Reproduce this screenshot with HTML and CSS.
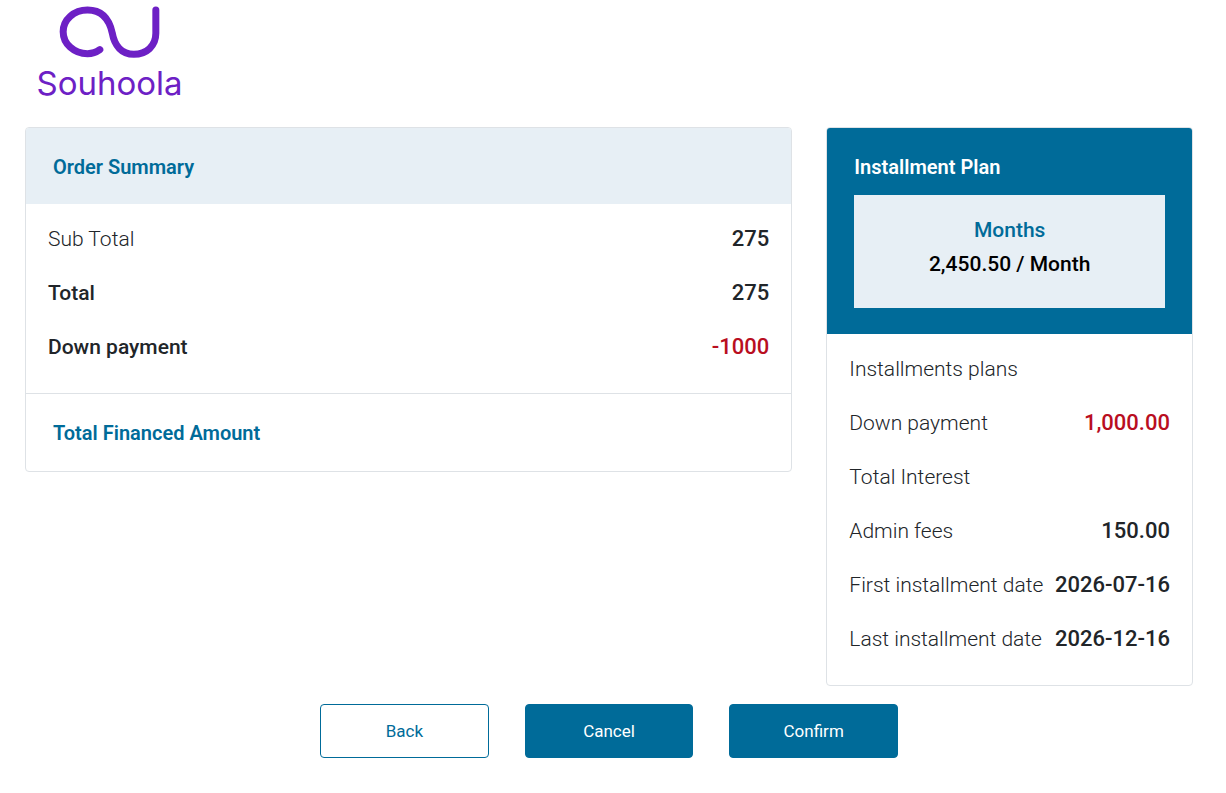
FILE: index.html
```
<!DOCTYPE html>
<html lang="en">
<head>
    <meta charset="UTF-8">
    <meta name="viewport" content="width=device-width, initial-scale=1">
    <title>Souhoola</title>
    <link rel="stylesheet" href="styles.css">
</head>
<body>
    <header class="logo">
        <svg class="logo-mark" viewBox="0 0 440 180" aria-hidden="true">
            <path d="M191 149 C180 157 168 161 154 161 C113 161 81 131 81 95 C81 59 113 30 154 30 C197 30 219 57 228 98 C235 138 257 163 293 163 C331 163 359 138 359 100 L359 30"/>
        </svg>
        <span class="logo-name">Souhoola</span>
    </header>

    <main>
        <div class="row">
            <div class="col-8">
                <section class="card">
                    <div class="card-header">
                        <h2>Order Summary</h2>
                    </div>
                    <dl class="list">
                        <div class="item"><dt>Sub Total</dt><dd>275</dd></div>
                        <div class="item strong"><dt>Total</dt><dd>275</dd></div>
                        <div class="item strong"><dt>Down payment</dt><dd class="red">-1000</dd></div>
                    </dl>
                    <div class="card-footer">
                        <h2>Total Financed Amount</h2>
                    </div>
                </section>
            </div>

            <div class="col-4">
                <section class="card">
                    <div class="plan-header">
                        <h2>Installment Plan</h2>
                        <div class="plan-box">
                            <div class="plan-months">Months</div>
                            <div>2,450.50 / Month</div>
                        </div>
                    </div>
                    <dl class="list">
                        <div class="item"><dt>Installments plans</dt><dd></dd></div>
                        <div class="item"><dt>Down payment</dt><dd class="red">1,000.00</dd></div>
                        <div class="item"><dt>Total Interest</dt><dd></dd></div>
                        <div class="item"><dt>Admin fees</dt><dd>150.00</dd></div>
                        <div class="item"><dt>First installment date</dt><dd>2026-07-16</dd></div>
                        <div class="item"><dt>Last installment date</dt><dd>2026-12-16</dd></div>
                    </dl>
                </section>
            </div>
        </div>

        <div class="actions">
            <button type="button" class="btn btn-outline">Back</button>
            <button type="button" class="btn">Cancel</button>
            <button type="button" class="btn">Confirm</button>
        </div>
    </main>
</body>
</html>
```
FILE: styles.css
```
* {
    box-sizing: border-box;
}

body {
    margin: 0;
    padding: 0 16px 0 8px;
    background-color: #fff;
    color: #212529;
    font-family: Roboto, "Noto Sans", sans-serif;
    font-size: 21px;
    line-height: 34px;
}

h2 {
    margin: 0;
    font-size: 20px;
    font-weight: 600;
    line-height: 34px;
    color: #006b99;
}

.logo {
    display: inline-flex;
    flex-direction: column;
    align-items: center;
    height: 127px;
    padding-left: 28px;
    color: #6d20c5;
}

.logo-mark {
    width: 147px;
    height: 60px;
}

.logo-mark path {
    fill: none;
    stroke: currentColor;
    stroke-width: 21;
    stroke-linecap: round;
}

.logo-name {
    font-family: Inter, sans-serif;
    font-size: 33px;
    font-weight: 400;
    line-height: 46px;
}

.row {
    display: flex;
    align-items: flex-start;
}

.col-8,
.col-4 {
    padding: 0 17px;
}

.col-8 {
    width: 66.6667%;
}

.col-4 {
    width: 33.3333%;
}

.card {
    border: 1px solid #dee2e6;
    border-radius: 4px;
    overflow: hidden;
}

.card-header {
    padding: 22px 27px 20px;
    background-color: #e7eff5;
}

.card-footer {
    padding: 22px 27px 21px;
    border-top: 1px solid #dee2e6;
}

.list {
    margin: 0;
    padding: 8px 22px 19px;
}

.item {
    display: flex;
    justify-content: space-between;
    padding: 10px 0;
    font-weight: 300;
}

.item dd {
    margin: 0;
    font-size: 22px;
    font-weight: 500;
}

.item.strong {
    font-weight: 500;
}

.item .red {
    color: #b90e1f;
}

.plan-header {
    padding: 22px 27px 26px;
    background-color: #006b99;
}

.plan-header h2 {
    margin-bottom: 11px;
    color: #fff;
}

.plan-box {
    padding: 18px 16px 27px;
    background-color: #e7eff5;
    color: #000;
    font-weight: 500;
    text-align: center;
}

.plan-months {
    color: #006b99;
}

.actions {
    display: flex;
    gap: 36px;
    width: 578px;
    max-width: 100%;
    margin: 18px auto 32px;
}

.btn {
    flex: 1;
    padding: 9px 16px;
    border: 1px solid #006b99;
    border-radius: 4px;
    background-color: #006b99;
    color: #fff;
    font-family: inherit;
    font-size: 17px;
    line-height: 34px;
    cursor: pointer;
}

.btn-outline {
    background-color: #fff;
    color: #006b99;
}
```
